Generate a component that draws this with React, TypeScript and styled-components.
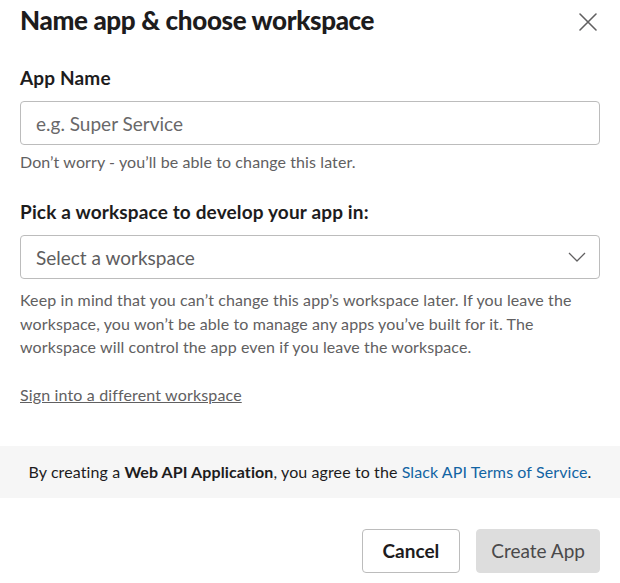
import React from "react";
import styled, { createGlobalStyle } from "styled-components";

const GlobalStyle = createGlobalStyle`
    html, body {
        margin: 0;
        padding: 0;
        background: #ffffff;
    }
    body {
        font-family: Lato, "Noto Sans", sans-serif;
        color: #1d1c1d;
    }
`

const App = () => {
    return (
        <>
            <GlobalStyle/>
            <Modal>
                <Header>
                    <Title>Name app &amp; choose workspace</Title>
                    <CloseButton aria-label="Close">
                        <svg width="20" height="20" viewBox="0 0 20 20" fill="none">
                            <path d="M2 2 L18 18 M18 2 L2 18" stroke="#616061" strokeWidth="1.6" strokeLinecap="round"/>
                        </svg>
                    </CloseButton>
                </Header>

                <Body>
                    <Field>
                        <Label>App Name</Label>
                        <TextInput placeholder="e.g. Super Service"/>
                        <Hint>Don’t worry - you’ll be able to change this later.</Hint>
                    </Field>

                    <Field>
                        <Label>Pick a workspace to develop your app in:</Label>
                        <SelectBox>
                            <span>Select a workspace</span>
                            <svg width="18" height="10" viewBox="0 0 18 10" fill="none">
                                <path d="M1 1 L9 9 L17 1" stroke="#616061" strokeWidth="1.3" strokeLinejoin="round"/>
                            </svg>
                        </SelectBox>
                        <Note>
                            Keep in mind that you can’t change this app’s workspace later. If you leave the
                            workspace, you won’t be able to manage any apps you’ve built for it. The
                            workspace will control the app even if you leave the workspace.
                        </Note>
                    </Field>

                    <SignInLink href="#">Sign into a different workspace</SignInLink>
                </Body>

                <Terms>
                    By creating a <strong>Web API Application</strong>, you agree to the{" "}
                    <TermsLink href="#">Slack API Terms of Service</TermsLink>.
                </Terms>

                <Footer>
                    <Button>Cancel</Button>
                    <Button primary disabled>Create App</Button>
                </Footer>
            </Modal>
        </>
    );
};

const Modal = styled.div`
    width: 620px;
    height: 583px;
    display: flex;
    flex-direction: column;
    box-sizing: border-box;
    overflow: hidden;
`

const Header = styled.div`
    display: flex;
    align-items: center;
    justify-content: space-between;
    height: 40px;
    padding: 0 20px 0 20px;
`

const Title = styled.h1`
    margin: 0;
    font-size: 26px;
    font-weight: 900;
    letter-spacing: -0.35px;
    line-height: 40px;
`

const CloseButton = styled.button`
    border: none;
    background: none;
    padding: 0;
    width: 20px;
    height: 20px;
    margin-top: 4px;
    margin-right: 2px;
    display: flex;
    align-items: center;
    justify-content: center;
    cursor: pointer;
`

const Body = styled.div`
    padding: 26px 20px 0 20px;
    display: flex;
    flex-direction: column;
`

const Field = styled.div`
    display: flex;
    flex-direction: column;
    margin-bottom: 28px;
`

const Label = styled.label`
    font-size: 19px;
    font-weight: 700;
    letter-spacing: 0.15px;
    line-height: 24px;
    margin-bottom: 11px;
`

const TextInput = styled.input`
    box-sizing: border-box;
    height: 44px;
    width: 100%;
    border: 1px solid #bcbcbc;
    border-radius: 4px;
    padding: 0 15px;
    font-family: Lato, "Noto Sans", sans-serif;
    font-size: 19px;
    color: #1d1c1d;
    outline: none;

    &::placeholder {
        color: #696869;
    }
`

const SelectBox = styled.div`
    box-sizing: border-box;
    height: 44px;
    border: 1px solid #bcbcbc;
    border-radius: 4px;
    padding: 0 13px 0 15px;
    display: flex;
    align-items: center;
    justify-content: space-between;
    font-size: 19px;
    color: #5e5d5e;
`

const Hint = styled.div`
    font-size: 16px;
    letter-spacing: 0.1px;
    line-height: 20px;
    color: #616061;
    margin-top: 7px;
`

const Note = styled(Hint)`
    line-height: 23.5px;
    margin-top: 9px;
`

const SignInLink = styled.a`
    align-self: flex-start;
    font-size: 16px;
    letter-spacing: 0.15px;
    line-height: 20px;
    color: #616061;
    text-decoration: underline;
    margin-top: -2px;
`

const Terms = styled.div`
    margin-top: 41px;
    height: 52px;
    background: #f6f6f6;
    display: flex;
    align-items: center;
    justify-content: center;
    font-size: 16px;
    letter-spacing: 0.1px;
    color: #1d1c1d;
    white-space: pre;

    strong {
        font-weight: 700;
    }
`

const TermsLink = styled.a`
    color: #1264a3;
    text-decoration: none;
`

const Footer = styled.div`
    display: flex;
    justify-content: flex-end;
    gap: 16px;
    padding: 31px 20px 0 20px;
`

const Button = styled.button<{ primary?: boolean }>`
    box-sizing: border-box;
    height: 44px;
    padding: 0 ${p => p.primary ? "14px" : "20px"};
    border-radius: 4px;
    font-family: Lato, "Noto Sans", sans-serif;
    font-size: 19px;
    font-weight: ${p => p.primary ? 400 : 700};
    border: 1px solid ${p => p.primary ? "#dddddd" : "#bcbcbc"};
    background: ${p => p.primary ? "#dddddd" : "#ffffff"};
    color: ${p => p.primary ? "#4a494a" : "#1d1c1d"};
`

export default App;
